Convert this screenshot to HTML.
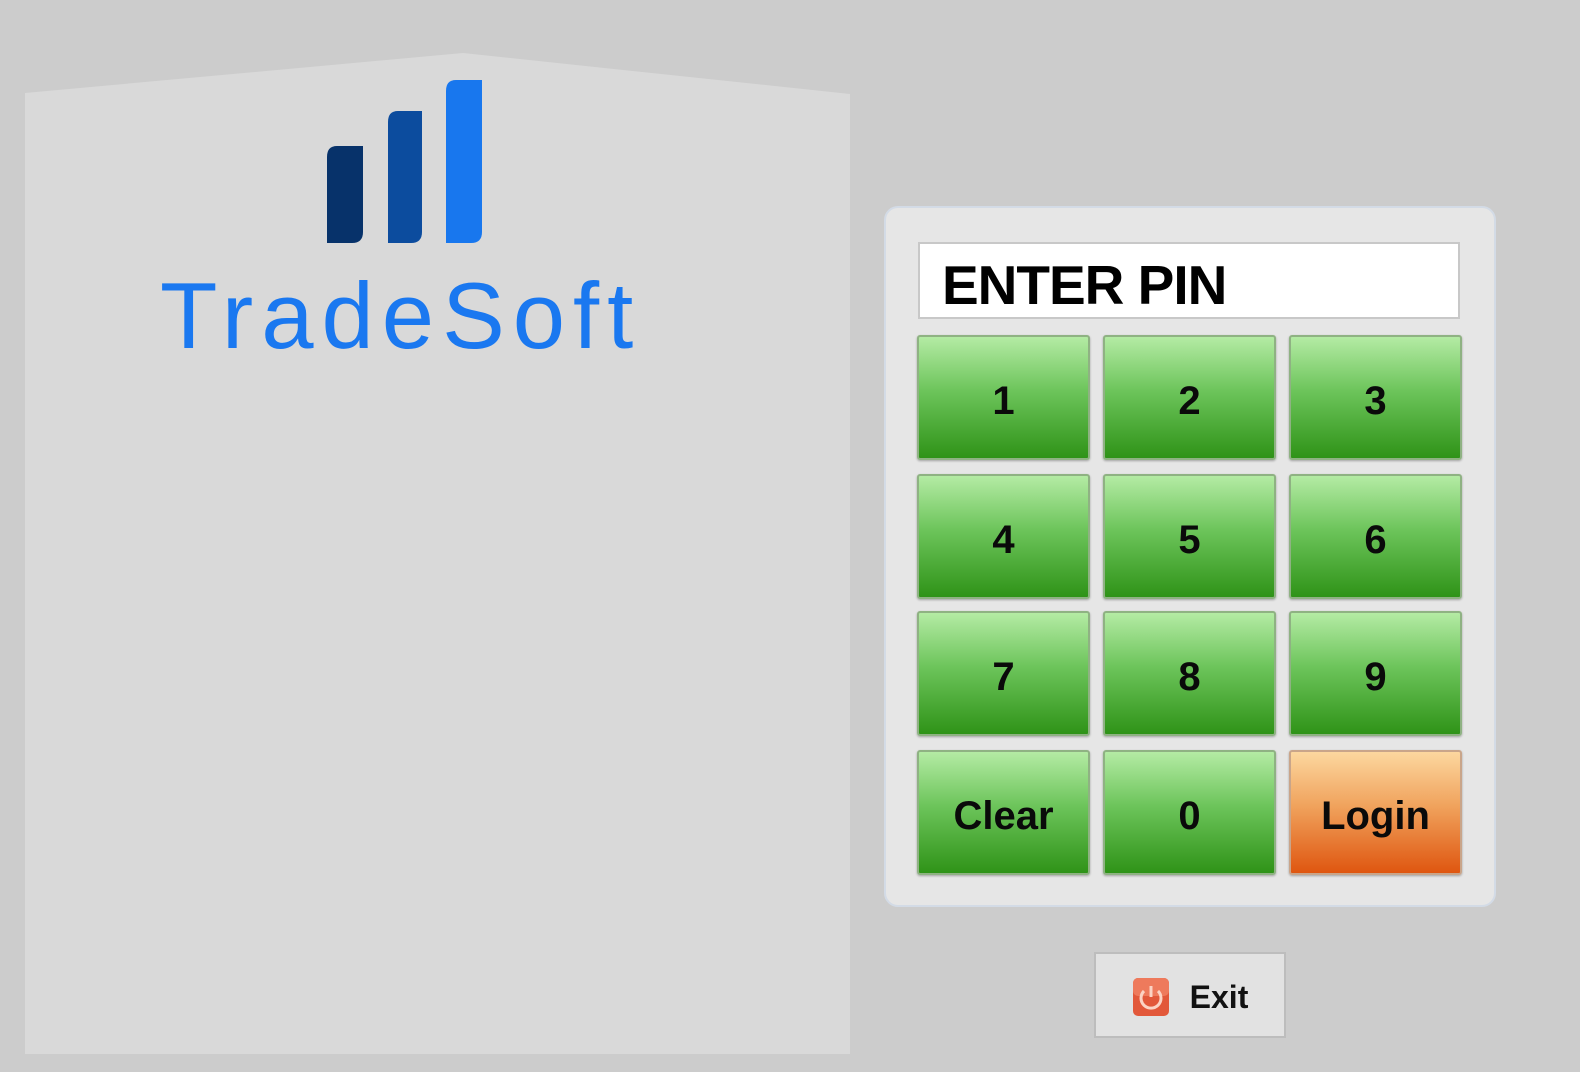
<!DOCTYPE html>
<html><head><meta charset="utf-8"><style>
*{margin:0;padding:0;box-sizing:border-box}
body{width:1580px;height:1072px;background:#cccccc;position:relative;overflow:hidden;font-family:"Liberation Sans",sans-serif}
.abs{position:absolute}
.panel{left:884px;top:206px;width:612px;height:701px;background:#e6e6e6;border:2px solid #d3dbe6;border-radius:14px}
.inp{left:918px;top:242px;width:542px;height:77px;background:#fff;border:2px solid #c8c8c8}
.inp span{position:absolute;left:22px;top:9px;font-size:55px;font-weight:bold;color:#000;letter-spacing:-1px}
.b{width:173px;height:125px;border:2px solid #8fb283;border-radius:3px;background:linear-gradient(#b4eba4,#6cc45a 45%,#2f9318);display:flex;align-items:center;justify-content:center;padding-top:8px;font-weight:bold;font-size:40px;color:#0a0a0a;box-shadow:0 1px 2px rgba(0,0,0,.3)}
.lg{background:linear-gradient(#fcd79f,#f0a25c 45%,#df5610);border-color:#c9a58a}
.exit{left:1094px;top:952px;width:192px;height:86px;background:#e2e2e2;border:2px solid #bdbdbd;display:flex;align-items:center;justify-content:center;padding-top:4px;font-weight:bold;font-size:32px;color:#111}
</style></head><body>
<svg class="abs" style="left:0;top:0" width="1580" height="1072">
<polygon points="25,93 463,53 850,94 850,1054 25,1054" fill="#d9d9d9"/>
<path d="M337,146 H363 V232 Q363,243 352,243 H327 V157 Q327,146 337,146Z" fill="#07326a"/>
<path d="M398,111 H422 V232 Q422,243 411,243 H388 V122 Q388,111 398,111Z" fill="#0c4c9e"/>
<path d="M456,80 H482 V232 Q482,243 471,243 H446 V91 Q446,80 456,80Z" fill="#1877ee"/>
<text x="160" y="348" font-family="Liberation Sans, sans-serif" font-size="94" fill="#1a78f0" letter-spacing="8">TradeSoft</text>
</svg>
<div class="abs panel"></div>
<div class="abs inp"><span>ENTER PIN</span></div>
<div class="abs b" style="left:917px;top:335px">1</div>
<div class="abs b" style="left:1103px;top:335px">2</div>
<div class="abs b" style="left:1289px;top:335px">3</div>
<div class="abs b" style="left:917px;top:474px">4</div>
<div class="abs b" style="left:1103px;top:474px">5</div>
<div class="abs b" style="left:1289px;top:474px">6</div>
<div class="abs b" style="left:917px;top:611px">7</div>
<div class="abs b" style="left:1103px;top:611px">8</div>
<div class="abs b" style="left:1289px;top:611px">9</div>
<div class="abs b" style="left:917px;top:750px">Clear</div>
<div class="abs b" style="left:1103px;top:750px">0</div>
<div class="abs b lg" style="left:1289px;top:750px">Login</div>
<div class="abs exit">
<svg width="38" height="40" style="margin-right:20px"><rect x="1" y="1" width="36" height="38" rx="5" fill="#e2583a"/><rect x="1" y="1" width="36" height="18" rx="5" fill="#ee7a5c"/><path d="M12,14 A10,10 0 1 0 26,14" fill="none" stroke="#fbd3c4" stroke-width="3"/><line x1="19" y1="9" x2="19" y2="20" stroke="#fbd3c4" stroke-width="3"/></svg>Exit</div>
</body></html>
